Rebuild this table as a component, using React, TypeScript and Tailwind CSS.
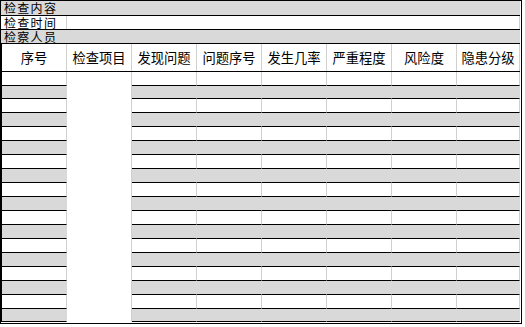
const heads = ["序号", "检查项目", "发现问题", "问题序号", "发生几率", "严重程度", "风险度", "隐患分级"];

const rowHeights = [14, 13, 14, 14, 14, 14, 14, 14, 14, 14, 14, 14, 14, 14, 14, 14, 14, 13];

const font = { fontFamily: '"Noto Sans CJK SC", "Noto Sans", sans-serif' };

export default function App() {
  return (
    <div className="h-[327px] w-[525px] bg-white text-black" style={font}>
      <div className="w-[522px] border border-black pr-px pb-px">
        {/* info rows */}
        <div className="flex h-[15px] items-center overflow-hidden border-b border-black bg-[#d9d9d9] pl-[3px] text-[12px] leading-[12px] tracking-[1.3px]">
          检查内容
        </div>
        <div className="flex h-[14px] overflow-hidden border-b border-black bg-white text-[12px] leading-[12px] tracking-[1.3px]">
          <div className="flex w-[66px] items-center border-r border-[#d0d0d0] pl-[3px]">检查时间</div>
          <div className="flex-1 border-r border-[#d0d0d0]" />
        </div>
        <div className="flex h-[14px] items-center overflow-hidden border-b border-black bg-[#d9d9d9] pl-[3px] text-[12px] leading-[12px] tracking-[1.3px]">
          检察人员
        </div>

        <div className="border-l border-black">
          {/* header */}
          <div className="grid h-[28px] grid-cols-[65px_65px_65px_65px_65px_65px_65px_63px] border-b border-black">
            {heads.map((h) => (
              <div
                key={h}
                className="flex items-center justify-center border-r border-[#d0d0d0] text-[13.3px] leading-none"
              >
                {h}
              </div>
            ))}
          </div>

          {/* body */}
          <div className="grid grid-cols-[65px_65px_65px_65px_65px_65px_65px_63px] grid-rows-[14px_13px_14px_14px_14px_14px_14px_14px_14px_14px_14px_14px_14px_14px_14px_14px_14px_13px]">
            <div className="col-start-2 row-span-18 row-start-1 border-r border-[#d0d0d0] bg-white" />
            {rowHeights.map((_, r) =>
              [0, 2, 3, 4, 5, 6, 7].map((c) => (
                <div
                  key={`${r}-${c}`}
                  className={
                    r % 2 === 0
                      ? "border-r border-b border-r-[#d0d0d0] border-b-black bg-white"
                      : "border-r border-b border-r-[#d9d9d9] border-b-black bg-[#d9d9d9]"
                  }
                />
              ))
            )}
          </div>
        </div>
      </div>
    </div>
  );
}
